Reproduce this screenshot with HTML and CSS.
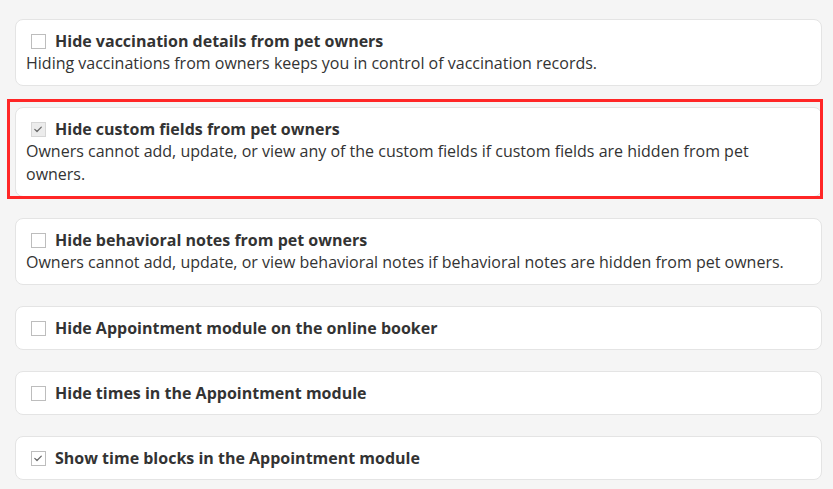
FILE: index.html
```html
<!DOCTYPE html>
<html lang="en">
<head>
  <meta charset="UTF-8" />
  <title>Pet owner settings</title>
  <link rel="stylesheet" href="styles.css">
</head>
<body>
  <main class="settings">
    <div class="option">
      <label class="option-title"><span class="box"></span>Hide vaccination details from pet owners</label>
      <div class="option-desc">Hiding vaccinations from owners keeps you in control of vaccination records.</div>
    </div>

    <div class="option highlight">
      <label class="option-title"><span class="box checked hover"><svg viewBox="0 0 14 14" width="14" height="14"><path d="M3.8 7.4l2.2 2.1 4.3-4.4" fill="none" stroke="#6a6a6a" stroke-width="1.3" stroke-linecap="round" stroke-linejoin="round"/></svg></span>Hide custom fields from pet owners</label>
      <div class="option-desc">Owners cannot add, update, or view any of the custom fields if custom fields are hidden from pet owners.</div>
    </div>

    <div class="option">
      <label class="option-title"><span class="box"></span>Hide behavioral notes from pet owners</label>
      <div class="option-desc">Owners cannot add, update, or view behavioral notes if behavioral notes are hidden from pet owners.</div>
    </div>

    <div class="option">
      <label class="option-title"><span class="box"></span>Hide Appointment module on the online booker</label>
    </div>

    <div class="option">
      <label class="option-title"><span class="box"></span>Hide times in the Appointment module</label>
    </div>

    <div class="option">
      <label class="option-title"><span class="box checked"><svg viewBox="0 0 14 14" width="14" height="14"><path d="M3.8 7.4l2.2 2.1 4.3-4.4" fill="none" stroke="#6a6a6a" stroke-width="1.3" stroke-linecap="round" stroke-linejoin="round"/></svg></span>Show time blocks in the Appointment module</label>
    </div>
  </main>
</body>
</html>
```

FILE: styles.css
```css
body {
  margin: 0;
  background: #f5f5f5;
  font-family: "Open Sans", "Noto Sans", sans-serif;
  color: #333;
}

.settings {
  display: flex;
  flex-direction: column;
  gap: 21px;
  padding: 19px 11px 0 15px;
}

.option {
  position: relative;
  background: #fff;
  border: 1px solid #e4e4e4;
  border-radius: 8px;
  padding: 11px 10px 10px 10px;
}

.option-title {
  display: flex;
  align-items: center;
  font-size: 16px;
  font-weight: 700;
  line-height: 21px;
}

.box {
  display: inline-flex;
  width: 15px;
  height: 15px;
  box-sizing: border-box;
  border: 1px solid #bdbdbd;
  background: #fff;
  margin: 0 9px 0 5px;
  flex-shrink: 0;
}

.box.hover {
  background: #ececec;
  border-color: #d6d6d6;
}

.box svg {
  margin: -1px;
}

.option-desc {
  font-size: 16px;
  line-height: 23px;
}

/* red annotation frame */
.highlight::after {
  content: "";
  position: absolute;
  left: -9px;
  top: -9px;
  right: -2px;
  bottom: -3px;
  border: 3px solid #ff2626;
}
```
